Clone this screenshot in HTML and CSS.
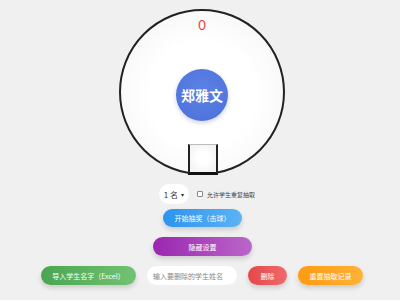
FILE: index.html
```html
<!DOCTYPE html>
<html lang="zh">
<head>
<meta charset="utf-8">
<link rel="stylesheet" href="styles.css">
</head>
<body>
<div class="page">
  <div class="wheel">
    <div class="count">0</div>
    <div class="ball">郑雅文</div>
    <div class="slot"></div>
  </div>
  <div class="controls">
    <div class="select">1 名 <span class="caret">▾</span></div>
    <label class="check"><span class="box"></span>允许学生重复抽取</label>
  </div>
  <button class="btn blue">开始抽奖（击球）</button>
  <button class="btn purple">隐藏设置</button>
  <div class="bottom">
    <button class="btn green">导入学生名字（Excel）</button>
    <div class="input">输入要删除的学生姓名</div>
    <button class="btn red">删除</button>
    <button class="btn orange">重置抽取记录</button>
  </div>
</div>
</body>
</html>
```
FILE: styles.css
```css
html, body {
  margin: 0;
  padding: 0;
  background: #f0f0f0;
  font-family: "Lato", "Noto Sans CJK SC", sans-serif;
}
.page {
  width: 400px;
  height: 300px;
  display: flex;
  flex-direction: column;
  align-items: center;
  padding-top: 9px;
  box-sizing: border-box;
}
.wheel {
  position: relative;
  width: 162px;
  height: 162px;
  border: 2px solid #222;
  border-radius: 50%;
  background: radial-gradient(circle at 50% 52%, #ffffff 0%, #ffffff 45%, #f2f2f2 100%);
  display: flex;
  align-items: center;
  justify-content: center;
  margin-left: 4px;
}
.count {
  position: absolute;
  top: 6px;
  left: 0;
  right: 0;
  text-align: center;
  color: #f03c3c;
  font-size: 13px;
  line-height: 16px;
}
.ball {
  width: 52px;
  height: 52px;
  border-radius: 50%;
  background: radial-gradient(circle at 50% 40%, #5b82e6 0%, #4c6fd8 100%);
  color: #fff;
  font-weight: bold;
  font-size: 14px;
  font-family: "Noto Sans CJK SC", sans-serif;
  display: flex;
  align-items: center;
  justify-content: center;
  margin-top: 5px;
  box-shadow: 0 2px 4px rgba(60, 80, 160, 0.25);
}
.slot {
  position: absolute;
  left: 67px;
  bottom: -2px;
  width: 26px;
  height: 27px;
  border: 2px solid #222;
  border-top: 1px solid #bbb;
  border-bottom: 3px solid #111;
  background: radial-gradient(circle, #ffffff 30%, #f0f0f0 100%);
}
.controls {
  display: flex;
  align-items: center;
  margin-top: 9px;
  gap: 8px;
  margin-left: 14px;
}
.select {
  background: #fff;
  border-radius: 10px;
  height: 20px;
  width: 30px;
  box-sizing: border-box;
  display: flex;
  align-items: center;
  justify-content: center;
  font-size: 8px;
  color: #333;
  font-family: "Noto Sans CJK SC", sans-serif;
  gap: 3px;
}
.caret { font-size: 6px; }
.check {
  display: flex;
  align-items: center;
  gap: 4px;
  font-size: 6px;
  color: #444;
  font-family: "Noto Sans CJK SC", sans-serif;
}
.box {
  width: 4px;
  height: 4px;
  border: 1px solid #888;
  border-radius: 1px;
  background: #fff;
}
.btn {
  border: none;
  border-radius: 10px;
  color: #fff;
  font-size: 7px;
  font-family: "Noto Sans CJK SC", sans-serif;
  height: 19px;
  padding: 0;
  display: flex;
  align-items: center;
  justify-content: center;
  box-shadow: 0 3px 5px rgba(0, 0, 0, 0.15);
}
.blue {
  width: 79px;
  height: 18px;
  margin-top: 5px;
  margin-left: 5px;
  background: linear-gradient(90deg, #2d93ee, #5cb3f4);
}
.purple {
  width: 99px;
  margin-top: 10px;
  margin-left: 5px;
  background: linear-gradient(90deg, #9a27b0, #bb66c9);
}
.bottom {
  display: flex;
  align-items: center;
  gap: 11px;
  margin-top: 10px;
  margin-left: 4px;
}
.green {
  width: 95px;
  background: linear-gradient(90deg, #4aa64e, #72c274);
}
.input {
  width: 90px;
  height: 19px;
  box-sizing: border-box;
  background: #fff;
  border-radius: 10px;
  font-size: 7px;
  color: #888;
  font-family: "Noto Sans CJK SC", sans-serif;
  display: flex;
  align-items: center;
  padding-left: 6px;
}
.red {
  width: 39px;
  background: linear-gradient(90deg, #e54848, #ef6b6b);
}
.orange {
  width: 65px;
  background: linear-gradient(90deg, #ff9a10, #ffb238);
}
```
